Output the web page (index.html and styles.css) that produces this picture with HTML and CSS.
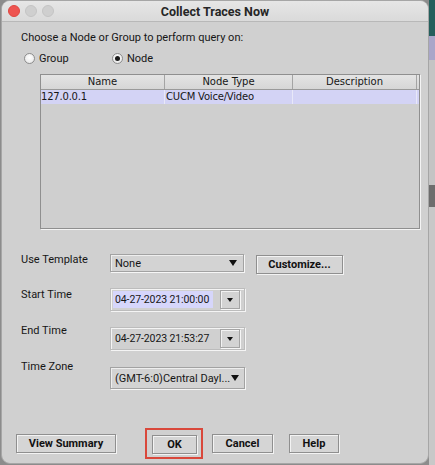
FILE: index.html
```html
<!DOCTYPE html>
<html>
<head>
<meta charset="utf-8">
<title>Collect Traces Now</title>
<link rel="stylesheet" href="styles.css">
</head>
<body>
<div class="desktop">
  <div class="window">
    <div class="titlebar">
      <div class="lights"><span class="light red"></span><span class="light"></span><span class="light"></span></div>
      <div class="title">Collect Traces Now</div>
      <div class="spacer"></div>
    </div>
    <div class="content">
      <p class="prompt">Choose a Node or Group to perform query on:</p>
      <div class="radios">
        <div class="opt"><span class="radio"></span><span>Group</span></div>
        <div class="opt"><span class="radio on"></span><span>Node</span></div>
      </div>
      <div class="table">
        <div class="thead">
          <div class="th">Name</div>
          <div class="th">Node Type</div>
          <div class="th">Description</div>
          <div class="th"></div>
        </div>
        <div class="tr sel">
          <div class="td">127.0.0.1</div>
          <div class="td">CUCM Voice/Video</div>
          <div class="td"></div>
          <div class="td"></div>
        </div>
      </div>
      <div class="form">
        <div class="row r1">
          <span class="lbl">Use Template</span>
          <div class="combo plain tpl"><span class="val">None</span><span class="tri"></span></div>
          <div class="btn customize">Customize...</div>
        </div>
        <div class="row r2">
          <span class="lbl">Start Time</span>
          <div class="combo date"><span class="field sel">04-27-2023 21:00:00</span><span class="abtn"><span class="tri small"></span></span></div>
        </div>
        <div class="row r3">
          <span class="lbl">End Time</span>
          <div class="combo date"><span class="field">04-27-2023 21:53:27</span><span class="abtn"><span class="tri small"></span></span></div>
        </div>
        <div class="row r4">
          <span class="lbl">Time Zone</span>
          <div class="combo plain tz"><span class="val">(GMT-6:0)Central Dayl...</span><span class="tri"></span></div>
        </div>
      </div>
      <div class="buttons">
        <div class="btn summary">View Summary</div>
        <div class="highlight"><div class="btn ok">OK</div></div>
        <div class="btn cancel">Cancel</div>
        <div class="btn help">Help</div>
      </div>
    </div>
  </div>
  <div class="side">
    <div class="s1"></div>
    <div class="s2"></div>
    <div class="s3"></div>
    <div class="s4"></div>
    <div class="s5"></div>
  </div>
</div>
</body>
</html>
```
FILE: styles.css
```css
* { box-sizing: border-box; margin: 0; padding: 0; }
html, body { width: 435px; height: 465px; overflow: hidden; }
body {
  font-family: Roboto, "Liberation Sans", Arial, sans-serif;
  font-size: 11px;
  color: #161616;
  background: #8c8c8c;
}
.desktop { display: flex; height: 465px; padding-left: 1px; }
.window {
  width: 428px;
  height: 464px;
  background: #d0d0d0;
  border: 1px solid #a6a6a6;
  border-radius: 9px;
  display: flex;
  flex-direction: column;
  overflow: hidden;
}
.titlebar {
  height: 21px;
  flex: none;
  display: flex;
  align-items: center;
  background: linear-gradient(#e6e6e6, #dadada);
  border-bottom: 1px solid #b8b8b8;
}
.lights { display: flex; gap: 5px; padding-left: 6px; width: 53px; flex: none; }
.light { width: 12px; height: 12px; border-radius: 50%; background: #cfcfcf; border: 1px solid #c4c4c4; }
.light.red { background: #ee5450; border-color: #de4740; }
.title { flex: 1; text-align: center; font-weight: 700; font-size: 12.5px; color: #262626; }
.spacer { width: 53px; flex: none; }

.content { flex: 1; display: flex; flex-direction: column; padding: 0 8px 4px 19px; }
.prompt { margin-top: 8px; line-height: 15px; }
.radios { margin-top: 6px; height: 15px; display: flex; align-items: center; }
.opt { display: flex; align-items: center; gap: 4px; }
.opt:first-child { width: 88px; margin-left: 3px; }
.radio {
  width: 11px; height: 11px; border-radius: 50%;
  border: 1px solid #8d8d8d;
  background: radial-gradient(circle at 50% 40%, #ffffff, #e2e2e2);
  display: flex; align-items: center; justify-content: center;
}
.radio.on::after { content: ""; width: 5px; height: 5px; border-radius: 50%; background: #1a1a1a; }

.table {
  margin-top: 8px;
  margin-left: 19px;
  width: 380px;
  height: 155px;
  border: 1px solid #8f8f8f;
  box-shadow: 1px 1px 0 #f4f4f4;
  background: #cfcfcf;
}
.thead, .tr { display: grid; grid-template-columns: 124px 128px 124px 1fr; }
.thead { height: 15px; background: linear-gradient(#e4e4e4, #d6d6d6); border-bottom: 1px solid #9a9a9a; }
.th { text-align: center; line-height: 14px; border-right: 1px solid #a4a4a4; font-family: "DejaVu Sans", sans-serif; font-size: 10px; }
.th:last-child { border-right: 0; }
.tr { height: 14px; }
.tr.sel { background: #d3d3f5; }
.td { line-height: 14px; padding-left: 1px; border-right: 1px solid #e8e8f8; font-family: "DejaVu Sans", sans-serif; font-size: 10px; letter-spacing: -0.2px; }
.td:first-child { padding-left: 0; }
.td:last-child { border-right: 0; }

.form { margin-top: 24px; display: flex; flex-direction: column; }
.row { display: flex; align-items: flex-start; height: 36px; }
.row.r1 { height: 35px; }
.lbl { width: 89px; flex: none; line-height: 14px; }

.combo { flex: none; display: flex; align-items: center; }
.combo.plain {
  width: 134px;
  border: 1px solid #a2a2a2;
  background: #d3d3d3;
  box-shadow: inset 1px 1px 0 #eeeeee, 1px 1px 0 #f6f6f6;
  padding: 0 4px 0 4px;
  justify-content: space-between;
}
.combo.tpl { height: 18px; margin-top: 1px; }
.combo.tz { height: 22px; width: 135px; margin-top: 7px; }
.tri { width: 0; height: 0; border-left: 4.5px solid transparent; border-right: 4.5px solid transparent; border-top: 6px solid #111; }
.tri.small { border-left-width: 3px; border-right-width: 3px; border-top-width: 4px; }
.combo.tpl .tri { margin-right: 2px; }
.combo.tz .tri { margin-right: 1px; }

.combo.date {
  width: 135px;
  height: 23px;
  border: 1px solid #bcbcbc;
  box-shadow: 1px 1px 0 #f4f4f4, inset 1px 1px 0 #f4f4f4;
  padding: 0 4px 0 2px;
  justify-content: space-between;
}
.row.r3 .combo.date { margin-top: 3px; }
.field { width: 100px; height: 17px; line-height: 17px; padding-left: 2px; font-size: 10.5px; letter-spacing: -0.1px; }
.field.sel { background: #d6d6fb; }
.abtn {
  width: 20px; height: 19px;
  border: 1px solid #a4a4a4;
  box-shadow: inset 1px 1px 0 #f2f2f2, 1px 1px 0 #f6f6f6;
  background: #d3d3d3;
  display: flex; align-items: center; justify-content: center;
}

.btn {
  flex: none;
  height: 19px;
  border: 1px solid #8f8f8f;
  background: #d5d5d5;
  box-shadow: inset 1px 1px 0 #f3f3f3, 1px 1px 0 #f3f3f3;
  font-weight: 700;
  text-align: center;
  line-height: 17px;
  color: #111;
}
.btn.customize { width: 87px; margin-left: 12px; margin-top: 2px; }

.buttons { margin-top: auto; display: flex; align-items: center; margin-left: -5px; }
.btn.summary { width: 100px; }
.highlight { margin-left: 29px; border: 2px solid #d9483b; padding: 5px 4px 3px 5px; }
.btn.ok { width: 45px; }
.btn.cancel { width: 61px; margin-left: 9px; }
.btn.help { width: 50px; margin-left: 16px; }

.side { flex: 1; display: flex; flex-direction: column; }
.s1 { height: 36px; background: #245f5c; }
.s2 { height: 24px; background: #a9a6c9; }
.s3 { height: 125px; background: #c4c4c4; }
.s4 { height: 22px; background: #6d6d6d; }
.s5 { flex: 1; background: #c8c8c8; }
```
